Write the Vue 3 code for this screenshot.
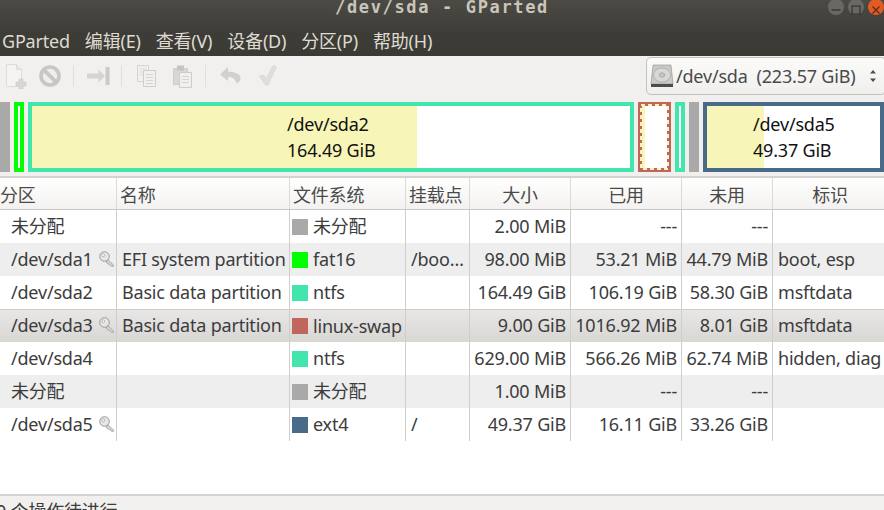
<script setup>
const menus = ['GParted', '编辑(E)', '查看(V)', '设备(D)', '分区(P)', '帮助(H)']
const columns = [
  { label: '分区', align: 'left' },
  { label: '名称', align: 'left' },
  { label: '文件系统', align: 'left' },
  { label: '挂载点', align: 'left' },
  { label: '大小', align: 'center' },
  { label: '已用', align: 'center' },
  { label: '未用', align: 'center' },
  { label: '标识', align: 'center' }
]
const rows = [
  { part: '未分配', key: false, name: '', color: '#a9a9a9', fs: '未分配', mount: '', size: '2.00 MiB', used: '---', free: '---', flags: '' },
  { part: '/dev/sda1', key: true, name: 'EFI system partition', color: '#00ff00', fs: 'fat16', mount: '/boo…', size: '98.00 MiB', used: '53.21 MiB', free: '44.79 MiB', flags: 'boot, esp', tint: true },
  { part: '/dev/sda2', key: false, name: 'Basic data partition', color: '#42e5ac', fs: 'ntfs', mount: '', size: '164.49 GiB', used: '106.19 GiB', free: '58.30 GiB', flags: 'msftdata' },
  { part: '/dev/sda3', key: true, name: 'Basic data partition', color: '#c1665a', fs: 'linux-swap', mount: '', size: '9.00 GiB', used: '1016.92 MiB', free: '8.01 GiB', flags: 'msftdata', selected: true },
  { part: '/dev/sda4', key: false, name: '', color: '#42e5ac', fs: 'ntfs', mount: '', size: '629.00 MiB', used: '566.26 MiB', free: '62.74 MiB', flags: 'hidden, diag' },
  { part: '未分配', key: false, name: '', color: '#a9a9a9', fs: '未分配', mount: '', size: '1.00 MiB', used: '---', free: '---', flags: '', tint: true },
  { part: '/dev/sda5', key: true, name: '', color: '#4a6a8a', fs: 'ext4', mount: '/', size: '49.37 GiB', used: '16.11 GiB', free: '33.26 GiB', flags: '' }
]
</script>

<template>
  <div class="app">
    <header class="chrome">
      <div class="titlebar">
        <span class="title">/dev/sda - GParted</span>
        <div class="winbtns">
          <span class="winbtn"><svg width="16" height="16" viewBox="0 0 16 16"><path d="M3.5 8h9" stroke="#2f2e2a" stroke-width="1.2"/></svg></span>
          <span class="winbtn"><svg width="16" height="16" viewBox="0 0 16 16"><rect x="4" y="4" width="8" height="8" fill="none" stroke="#2f2e2a" stroke-width="1.1"/></svg></span>
          <span class="winbtn close"><svg width="16" height="16" viewBox="0 0 16 16"><path d="M4.5 4.5l7 7M11.5 4.5l-7 7" stroke="#5c2a14" stroke-width="1.2"/></svg></span>
        </div>
      </div>
      <nav class="menubar">
        <span v-for="m in menus" :key="m" class="menu">{{ m }}</span>
      </nav>
    </header>

    <div class="toolbar">
      <div class="tools">
        <svg class="ico" width="24" height="26" viewBox="0 0 24 26">
          <path d="M1.5 1.5h10l5 5v17h-15z" fill="#f5f4f2" stroke="#dedcd9"/>
          <path d="M11.500 1.500v5h5" fill="#e8e6e3" stroke="#dedcd9"/>
          <path d="M14 16h4v3h3v4h-3v3h-4v-3h-3v-4h3z" fill="#d9d7d4" stroke="#cbc9c6" stroke-width=".6"/>
        </svg>
        <svg class="ico stop" width="24" height="24" viewBox="0 0 24 24">
          <circle cx="12" cy="12" r="9" fill="#efeeec" stroke="#c9c6c3" stroke-width="3.6"/>
          <path d="M5.600 5.600l12.800 12.800" stroke="#c9c6c3" stroke-width="3.800"/>
        </svg>
        <i class="sep"></i>
        <svg class="ico arrow" width="23" height="22" viewBox="0 0 23 22">
          <path d="M1.500 8.500h10V4.500l6.500 6.500-6.500 6.500v-4h-10a2 2 0 0 1 0-5z" fill="#d6d4d1"/>
          <rect x="18.500" y="2" width="4" height="18" fill="#cbc9c6"/>
        </svg>
        <i class="sep"></i>
        <svg class="ico copy" width="22" height="24" viewBox="0 0 22 24">
          <path d="M1.500 1.500h11v16h-11z" fill="#f1f0ee" stroke="#d6d4d1"/>
          <path d="M3.500 5h7M3.500 8h7M3.500 11h7" stroke="#dedcd9"/>
          <path d="M7.500 6.500h12v16h-12z" fill="#f1f0ee" stroke="#cfcdca"/>
          <path d="M10 10.500h7M10 13.500h7M10 16.500h7M10 19.500h7" stroke="#d6d4d1"/>
        </svg>
        <svg class="ico paste" width="22" height="24" viewBox="0 0 22 24">
          <path d="M1.500 4.500h14v16h-14z" fill="#d9d7d4" stroke="#cfcdca"/>
          <rect x="5" y="1.500" width="7" height="5" fill="#c6c4c1"/>
          <path d="M7.500 8.500h12v15h-12z" fill="#f1f0ee" stroke="#cfcdca"/>
          <path d="M10 12.500h7M10 15.500h7M10 18.500h7" stroke="#d6d4d1"/>
        </svg>
        <i class="sep"></i>
        <svg class="ico undo" width="24" height="22" viewBox="0 0 24 22">
          <path d="M9 2L1 9.500 9 16v-4c4 0 7 1 8.500 6.500 1.500-.5 4-2.500 4-5.500 0-4-5-6-12.500-6.500z" fill="#d2d0cd"/>
        </svg>
        <svg class="ico check" width="20" height="24" viewBox="0 0 20 24">
          <path d="M1.500 12l4-1 2.500 4L15 1.500l3.500 1.500-8.500 18h-2.500L1.500 12z" fill="#e0dedb" stroke="#d4d2cf" stroke-width=".6"/>
        </svg>
      </div>
      <div class="devsel">
        <svg width="24" height="24" viewBox="0 0 24 24">
          <path d="M3 1h18l2 19H1z" fill="#c9c9c7" stroke="#8f8f8d" stroke-width=".6"/>
          <ellipse cx="12" cy="11" rx="8.500" ry="7" fill="#d8d8d6" stroke="#a5a5a3" stroke-width=".7"/>
          <ellipse cx="12" cy="11" rx="2.800" ry="2.200" fill="#c4c4c2" stroke="#9b9b99" stroke-width=".6"/>
          <rect x="1" y="20" width="22" height="3" fill="#4c4c4a"/>
        </svg>
        <span class="devname">/dev/sda&nbsp;&nbsp;(223.57 GiB)</span>
        <svg class="updown" width="8" height="14" viewBox="0 0 8 14">
          <path d="M4 1l3 3.500H1zM4 13l-3-3.500h6z" fill="#4c4c4a"/>
        </svg>
      </div>
    </div>

    <section class="diskbar">
      <div class="seg un"></div>
      <div class="seg fat"></div>
      <div class="seg ntfs big">
        <div class="fill big-fill"></div>
        <div class="label">/dev/sda2<br>164.49 GiB</div>
      </div>
      <div class="seg swap">
        <div class="fill swap-fill"></div>
        <svg class="dashes" width="33" height="70" viewBox="0 0 33 70">
          <rect x="3" y="3" width="27" height="64" fill="none" stroke="#f7f6b8" stroke-width="2" stroke-dasharray="4 3"/>
        </svg>
      </div>
      <div class="seg ntfs small"></div>
      <div class="seg un"></div>
      <div class="seg ext">
        <div class="fill ext-fill"></div>
        <div class="label">/dev/sda5<br>49.37 GiB</div>
      </div>
    </section>

    <section class="table">
      <div class="thead row">
        <div v-for="c in columns" :key="c.label" class="th" :class="c.align">{{ c.label }}</div>
      </div>
      <div v-for="r in rows" :key="r.part + r.size" class="row tr" :class="{ tint: r.tint, selected: r.selected }">
        <div class="td part">
          <span class="pname">{{ r.part }}</span>
          <svg v-if="r.key" class="key" width="16" height="16" viewBox="0 0 16 16">
            <path d="M9 9l5.500 5v1.300h-2l-1-1.300-1 0-1-1.300-1 0-1.500-1.700z" fill="#d6d6d4" stroke="#9a9a98" stroke-width=".8"/>
            <circle cx="5.500" cy="5.500" r="4.800" fill="#e6e6e4" stroke="#9a9a98"/>
            <circle cx="4.300" cy="4.300" r="1.400" fill="#fff" stroke="#9a9a98" stroke-width=".7"/>
          </svg>
        </div>
        <div class="td">{{ r.name }}</div>
        <div class="td fs"><i class="swatch" :style="{ background: r.color }"></i>{{ r.fs }}</div>
        <div class="td">{{ r.mount }}</div>
        <div class="td num">{{ r.size }}</div>
        <div class="td num">{{ r.used }}</div>
        <div class="td num">{{ r.free }}</div>
        <div class="td flags">{{ r.flags }}</div>
      </div>
    </section>

    <footer class="status">0 个操作待进行</footer>
  </div>
</template>

<style scoped>
.app {
  width: 884px;
  height: 510px;
  overflow: hidden;
  display: flex;
  flex-direction: column;
  background: #fff;
  font-family: "Noto Sans", "Noto Sans CJK SC", sans-serif;
  font-size: 18px;
  letter-spacing: -0.2px;
  color: #3c3c3c;
}
.chrome {
  height: 56px;
  flex: none;
  background: linear-gradient(#4c4a44, #3e3c37 60%, #3b3a35);
  color: #dfdbd2;
}
.titlebar {
  height: 22px;
  position: relative;
  display: flex;
  justify-content: center;
  align-items: flex-start;
}
.title {
  font-family: "DejaVu Sans Mono", "Liberation Mono", monospace;
  font-size: 17px;
  font-weight: 700;
  line-height: 16px;
  letter-spacing: 1.65px;
  margin-top: -1px;
  color: #c9c5bc;
  white-space: nowrap;
}
.winbtns {
  position: absolute;
  top: -1px;
  right: 0;
  display: flex;
  gap: 4px;
}
.winbtn {
  width: 16px;
  height: 16px;
  border-radius: 50%;
  background: #6a6862;
  display: block;
}
.winbtn.close {
  background: #e25a26;
}
.menubar {
  display: flex;
  gap: 15px;
  height: 34px;
  align-items: center;
  padding-left: 2px;
  padding-top: 4px;
  box-sizing: border-box;
}
.menu {
  line-height: 20px;
}
.toolbar {
  height: 40px;
  flex: none;
  background: #f1f0ee;
  display: flex;
  justify-content: space-between;
  align-items: center;
  box-sizing: border-box;
  padding-left: 5px;
}
.tools {
  display: flex;
  align-items: center;
}
.ico {
  flex: none;
}
.stop {
  margin-left: 9px;
}
.sep {
  width: 1px;
  height: 22px;
  background: #e0dedb;
  margin: 0 11px;
}
.arrow {
  margin-left: 2px;
  margin-right: 0;
}
.copy {
  margin-left: 3px;
  margin-right: 14px;
}
.undo {
  margin-left: 2px;
  margin-right: 15px;
}
.devsel {
  width: 240px;
  height: 38px;
  margin-right: -2px;
  border: 1px solid #c4c2bf;
  border-radius: 5px;
  background: linear-gradient(#fbfbfa, #f0efed);
  box-sizing: border-box;
  display: flex;
  align-items: center;
  padding: 0 0 0 3px;
}
.devname {
  color: #4a4a4a;
  margin-left: 2px;
  white-space: pre;
}
.updown {
  margin-left: auto;
  margin-right: 8px;
}
.diskbar {
  height: 82px;
  flex: none;
  background: #f1f0ee;
  display: flex;
  gap: 4px;
  padding-top: 6px;
  box-sizing: border-box;
  border-bottom: 2px solid #d6d3cf;
}
.seg {
  height: 70px;
  box-sizing: border-box;
  position: relative;
  background: #fff;
  flex: none;
}
.un {
  background: #a9a9a9;
  width: 10px;
}
.fat {
  width: 10px;
  border: 4px solid #00ff00;
}
.ntfs {
  border: 4px solid #42e5ac;
}
.big {
  width: 606px;
}
.small {
  width: 10px;
}
.swap {
  width: 33px;
  border: 4px solid #c1665a;
}
.dashes {
  position: absolute;
  left: -4px;
  top: -4px;
}
.ext {
  width: 181px;
  border: 4px solid #4a6a8a;
}
.fill {
  position: absolute;
  left: 0;
  top: 0;
  bottom: 0;
  background: #f7f6b8;
}
.big-fill {
  width: 385px;
}
.swap-fill {
  width: 3px;
}
.ext-fill {
  width: 57px;
}
.label {
  position: absolute;
  inset: 0;
  line-height: 26px;
  color: #111;
}
.big .label {
  padding: 5px 0 0 255px;
}
.ext .label {
  padding: 5px 0 0 46px;
}
.table {
  flex: 1;
  min-height: 0;
}
.row {
  display: grid;
  grid-template-columns: 117px 173px 116px 64px 101px 111px 91px 111px;
}
.thead {
  height: 32px;
  background: linear-gradient(#fff, #f3f2f0);
  border-bottom: 1px solid #c9c6c2;
  box-sizing: border-box;
}
.th {
  height: 31px;
  line-height: 34px;
  padding: 0 0 0 3px;
  border-right: 1px solid #dcdad7;
  box-sizing: border-box;
  color: #4a4a4a;
  white-space: nowrap;
}
.th:first-child {
  padding-left: 0;
}
.th.center {
  text-align: center;
  padding: 0;
}
.th:last-child {
  padding-left: 3px;
  border-right: 0;
}
.tr {
  height: 33px;
}
.tint .td {
  background: #eeeeee;
}
.selected .td {
  background: linear-gradient(#e8e7e5, #d9d7d4);
  border-top: 1px solid #cfcdca;
}
.td {
  line-height: 33px;
  padding-left: 5px;
  border-right: 1px solid #d0cecb;
  box-sizing: border-box;
  white-space: nowrap;
  overflow: hidden;
  position: relative;
}
.selected .td {
  line-height: 31px;
}
.td:last-child {
  border-right: 0;
}
.part {
  padding-left: 11px;
}
.key {
  position: absolute;
  right: 1px;
  top: 8px;
}
.selected .key {
  top: 7px;
}
.fs {
  display: flex;
  align-items: center;
  gap: 5px;
  padding-left: 2px;
}
.swatch {
  width: 16px;
  height: 16px;
  flex: none;
}
.num {
  text-align: right;
  padding: 0 4px 0 0;
}
.status {
  flex: none;
  margin-top: auto;
  height: 16px;
  background: #f1f0ee;
  border-top: 2px solid #d6d3cf;
  line-height: 30px;
  white-space: nowrap;
  text-indent: -4px;
  box-sizing: border-box;
  overflow: hidden;
}
</style>
